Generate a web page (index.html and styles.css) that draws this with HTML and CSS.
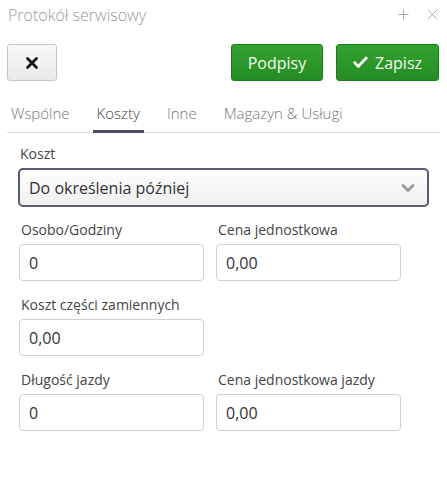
FILE: index.html
```html
<!DOCTYPE html>
<html lang="pl">
<head>
<meta charset="utf-8">
<title>Protokół serwisowy</title>
<link rel="stylesheet" href="styles.css">
</head>
<body>
<div class="dialog">
  <header class="titlebar">
    <span class="title">Protokół serwisowy</span>
    <span class="win-icons">
      <svg class="win-icon" width="11" height="11" viewBox="0 0 11 11"><path d="M5.5 0.5v10M0.5 5.5h10" stroke="#aaa" stroke-width="1" fill="none"/></svg>
      <svg class="win-icon" width="11" height="11" viewBox="0 0 11 11"><path d="M0.8 0.8l9.4 9.4M10.2 0.8l-9.4 9.4" stroke="#aaa" stroke-width="1" fill="none"/></svg>
    </span>
  </header>

  <div class="toolbar">
    <button class="btn btn-close" type="button" aria-label="Zamknij">
      <svg width="14" height="14" viewBox="0 0 14 14"><path d="M2.5 2.5l9 9M11.5 2.5l-9 9" stroke="#111" stroke-width="2.8" stroke-linecap="round" fill="none"/></svg>
    </button>
    <div class="spacer"></div>
    <button class="btn btn-green" type="button">Podpisy</button>
    <button class="btn btn-green btn-save" type="button">
      <svg width="15" height="13" viewBox="0 0 15 13"><path d="M1.8 6.8l3.6 3.6 7.8-8.4" stroke="#fff" stroke-width="2.8" fill="none" stroke-linecap="round" stroke-linejoin="round"/></svg>
      Zapisz
    </button>
  </div>

  <nav class="tabs">
    <span class="tab">Wspólne</span>
    <span class="tab active">Koszty</span>
    <span class="tab">Inne</span>
    <span class="tab">Magazyn &amp; Usługi</span>
  </nav>

  <form class="form">
    <div class="field full">
      <label class="label">Koszt</label>
      <div class="select">
        <span>Do określenia później</span>
        <svg width="14" height="10" viewBox="0 0 14 10"><path d="M2 2.5l5 5 5-5" stroke="#999" stroke-width="2.6" fill="none" stroke-linecap="round" stroke-linejoin="round"/></svg>
      </div>
    </div>

    <div class="row">
      <div class="field">
        <label class="label">Osobo/Godziny</label>
        <div class="input">0</div>
      </div>
      <div class="field">
        <label class="label">Cena jednostkowa</label>
        <div class="input">0,00</div>
      </div>
    </div>

    <div class="row">
      <div class="field">
        <label class="label">Koszt części zamiennych</label>
        <div class="input">0,00</div>
      </div>
    </div>

    <div class="row">
      <div class="field">
        <label class="label">Długość jazdy</label>
        <div class="input">0</div>
      </div>
      <div class="field">
        <label class="label">Cena jednostkowa jazdy</label>
        <div class="input">0,00</div>
      </div>
    </div>
  </form>
</div>
</body>
</html>
```

FILE: styles.css
```css
* { box-sizing: border-box; }

html, body {
  margin: 0;
  padding: 0;
  background: #fff;
}

body {
  font-family: "Open Sans", "Liberation Sans", sans-serif;
  color: #333;
}

.dialog {
  width: 447px;
  height: 494px;
}

.titlebar {
  display: flex;
  align-items: center;
  justify-content: space-between;
  height: 30px;
  padding: 0 9px 0 8px;
}

.title {
  font-size: 16px;
  font-weight: 300;
  color: #999;
}

.win-icons {
  display: flex;
  gap: 18px;
  align-items: center;
  margin-top: -2px;
}

.win-icon { display: block; }

.toolbar {
  display: flex;
  align-items: center;
  margin-top: 14px;
  padding: 0 8px 0 7px;
  gap: 13px;
}

.spacer { flex: 1; }

.btn {
  height: 37px;
  border-radius: 3px;
  font-family: "Open Sans", "Liberation Sans", sans-serif;
  font-size: 16px;
  display: flex;
  align-items: center;
  justify-content: center;
  padding: 0;
  cursor: pointer;
}

.btn-close {
  width: 50px;
  background: linear-gradient(#f8f8f8, #e9e9e9);
  border: 1px solid #c6c6c6;
}

.btn-green {
  width: 92px;
  color: #f2f7f2;
  background: linear-gradient(#33a32f, #248c22);
  border: 1px solid #1e7a1d;
}

.btn-save {
  width: 103px;
  gap: 7px;
}

.btn-save svg { margin-top: -1px; }

.tabs {
  display: flex;
  margin: 18px 7px 0 7px;
  border-bottom: 1px solid #dcdcdc;
  gap: 19px;
}

.tab {
  font-size: 15px;
  font-weight: 300;
  color: #777;
  padding: 4px 4px 7px 4px;
  line-height: 20px;
  border-bottom: 3px solid transparent;
  margin-bottom: -1px;
}

.tab.active {
  color: #444;
  border-bottom-color: #4c4c66;
}

.form {
  padding: 11px 18px 0 18px;
  display: flex;
  flex-direction: column;
  gap: 14px;
}

.field {
  display: flex;
  flex-direction: column;
  gap: 4px;
}

.field.full { margin-bottom: -1px; }

.label {
  font-size: 14px;
  line-height: 20px;
  color: #444;
  padding-left: 2px;
}

.select {
  height: 39px;
  border: 2px solid #5a5a70;
  border-radius: 5px;
  background: linear-gradient(#fdfdfd, #f0f0f0);
  display: flex;
  align-items: center;
  justify-content: space-between;
  padding: 0 12px 0 9px;
  font-size: 16px;
  color: #333;
}

.select svg { margin-top: 1px; }

.row {
  display: flex;
  gap: 12px;
  padding-left: 1px;
}

.row .field { width: 185px; }

.input {
  height: 37px;
  border: 1px solid #cfcfcf;
  border-radius: 4px;
  background: #fff;
  font-size: 16px;
  color: #333;
  display: flex;
  align-items: center;
  padding-left: 9px;
}
```
